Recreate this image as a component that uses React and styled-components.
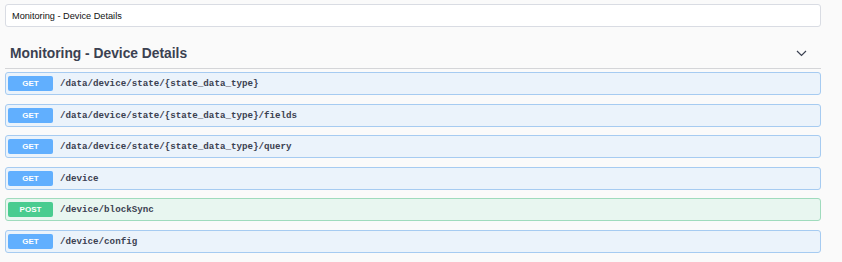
import React from "react";
import styled, { createGlobalStyle } from "styled-components";

const methodColors = {
  GET: { main: "#61affe", border: "#a6cbf1", bg: "#ebf3fb" },
  POST: { main: "#49cc90", border: "#9fdbbd", bg: "#e8f6f0" },
};

const operations = [
  { method: "GET", path: "/data/device/state/{state_data_type}" },
  { method: "GET", path: "/data/device/state/{state_data_type}/fields" },
  { method: "GET", path: "/data/device/state/{state_data_type}/query" },
  { method: "GET", path: "/device" },
  { method: "POST", path: "/device/blockSync" },
  { method: "GET", path: "/device/config" },
];

const GlobalStyle = createGlobalStyle`
  html, body {
    margin: 0;
    background: #fafafa;
  }

  body {
    font-family: "Liberation Sans", Arial, sans-serif;
    color: #3b4151;
  }
`;

const Page = styled.div`
  padding: 4px 21px 0 5px;
`;

const FilterInput = styled.input`
  display: block;
  width: 100%;
  height: 23px;
  box-sizing: border-box;
  margin: 0;
  padding: 0 6px;
  border: 1px solid #d9dce3;
  border-radius: 3px;
  background: #fff;
  font-family: "Liberation Sans", Arial, sans-serif;
  font-size: 9.2px;
  color: #111;
  outline: none;
`;

const TagHeader = styled.div`
  display: flex;
  align-items: center;
  justify-content: space-between;
  height: 29px;
  margin-top: 12px;
  padding: 0 14px 0 5px;
  border-bottom: 1px solid rgba(59, 65, 81, 0.2);
`;

const TagTitle = styled.h3`
  margin: 0;
  font-size: 13.8px;
  font-weight: bold;
  color: #3b4151;
`;

const Chevron = styled.svg`
  width: 11px;
  height: 7px;
  display: block;
`;

const OperationList = styled.div`
  padding-top: 3px;
`;

const OperationRow = styled.div`
  display: flex;
  align-items: center;
  height: 23px;
  box-sizing: border-box;
  margin-bottom: 8.6px;
  padding: 0 2px;
  border: 1px solid ${({ method }) => methodColors[method].border};
  border-radius: 3px;
  background: ${({ method }) => methodColors[method].bg};
`;

const MethodBadge = styled.span`
  display: flex;
  align-items: center;
  justify-content: center;
  width: 45px;
  height: 15px;
  border-radius: 2px;
  background: ${({ method }) => methodColors[method].main};
  color: #fff;
  font-size: 8px;
  font-weight: bold;
`;

const OperationPath = styled.span`
  margin-left: 7px;
  font-family: "Liberation Mono", "DejaVu Sans Mono", monospace;
  font-size: 9.2px;
  font-weight: bold;
  color: #3b4151;
`;

export default function App() {
  return (
    <>
      <GlobalStyle />
      <Page>
        <FilterInput defaultValue="Monitoring - Device Details" />
        <TagHeader>
          <TagTitle>Monitoring - Device Details</TagTitle>
          <Chevron viewBox="0 0 11 7">
            <polyline
              points="1,1 5.5,5.5 10,1"
              fill="none"
              stroke="#3b4151"
              strokeWidth="1.2"
            />
          </Chevron>
        </TagHeader>
        <OperationList>
          {operations.map((op) => (
            <OperationRow key={op.path} method={op.method}>
              <MethodBadge method={op.method}>{op.method}</MethodBadge>
              <OperationPath>{op.path}</OperationPath>
            </OperationRow>
          ))}
        </OperationList>
      </Page>
    </>
  );
}
